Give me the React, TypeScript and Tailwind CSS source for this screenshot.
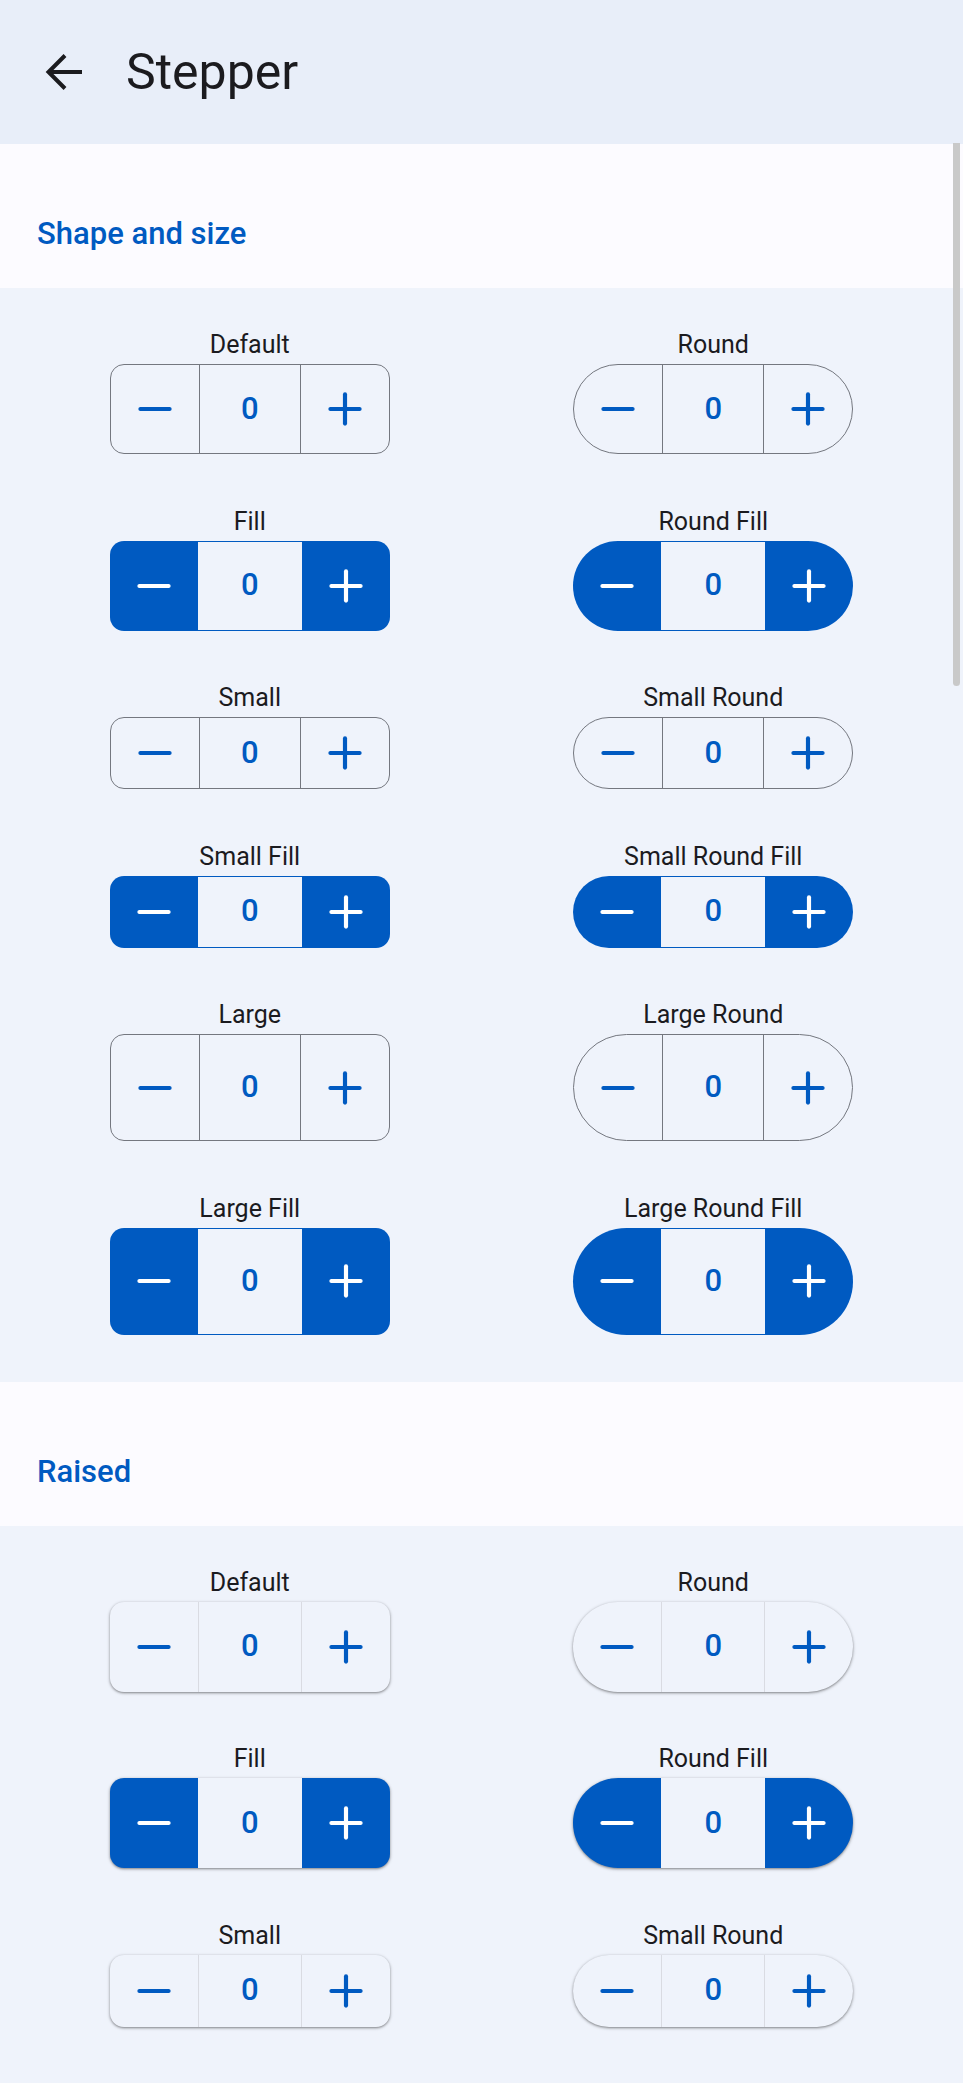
import React from "react";

type Size = "sm" | "md" | "lg";

type Variant = {
  label: string;
  size: Size;
  round?: boolean;
  fill?: boolean;
};

const heights: Record<Size, string> = {
  sm: "h-[72px]",
  md: "h-[90px]",
  lg: "h-[107px]"
};

const shapeRows: [Variant, Variant][] = [
  [
    { label: "Default", size: "md" },
    { label: "Round", size: "md", round: true }
  ],
  [
    { label: "Fill", size: "md", fill: true },
    { label: "Round Fill", size: "md", round: true, fill: true }
  ],
  [
    { label: "Small", size: "sm" },
    { label: "Small Round", size: "sm", round: true }
  ],
  [
    { label: "Small Fill", size: "sm", fill: true },
    { label: "Small Round Fill", size: "sm", round: true, fill: true }
  ],
  [
    { label: "Large", size: "lg" },
    { label: "Large Round", size: "lg", round: true }
  ],
  [
    { label: "Large Fill", size: "lg", fill: true },
    { label: "Large Round Fill", size: "lg", round: true, fill: true }
  ]
];

export default function App() {
  return (
    <div
      className="relative h-[2083px] w-[963px] overflow-hidden bg-[#eff3fb] text-[#1b1b1f]"
      style={{ fontFamily: "Roboto, 'Noto Sans', sans-serif" }}
    >
      <header className="flex h-[144px] items-center bg-[#e8eef9]">
        <svg className="ml-[45px] h-[36px] w-[37px]" viewBox="0 0 37 36" fill="none" stroke="#1b1b1f" strokeWidth="4">
          <path d="M3 18H37" />
          <path d="M20 1.5L3.5 18L20 34.5" />
        </svg>
        <h1 className="ml-[44px] text-[50px] font-normal leading-none">Stepper</h1>
      </header>

      <Section title="Shape and size" raised={false} rows={shapeRows} />
      {/* only the rows that fit on screen */}
      <Section title="Raised" raised rows={shapeRows.slice(0, 3)} />

      <div className="absolute right-[3px] top-[143px] h-[543px] w-[7px] rounded-b-[4px] bg-[#c9c9c9]" />
    </div>
  );
}

function Section({ title, raised, rows }: { title: string; raised: boolean; rows: [Variant, Variant][] }) {
  return (
    <section>
      <div className="h-[144px] bg-[#fcfbff] pl-[37px] pt-[72px]">
        <h2 className="text-[31px] font-medium leading-[36px] text-[#005ac1]">{title}</h2>
      </div>
      <div className="grid grid-cols-2 gap-y-[52.5px] px-[18px] pb-[47px] pt-[42px]">
        {rows.flat().map((v) => (
          <div key={v.label} className="flex flex-col items-center">
            <span className="text-[25px] leading-[30px]">{v.label}</span>
            <Stepper {...v} raised={raised} />
          </div>
        ))}
      </div>
    </section>
  );
}

function Stepper({ size, round, fill, raised }: Variant & { raised: boolean }) {
  const shape = round ? "rounded-full" : "rounded-[14px]";
  const frame = fill
    ? "bg-[#005ac1]"
    : raised
      ? "bg-[#eff3fb]"
      : "border border-[#74777f]";
  const divider = fill
    ? raised
      ? ""
      : "border-y border-[#005ac1]"
    : raised
      ? "border-x border-[#d9dbe2]"
      : "border-x border-[#74777f]";
  const icon = fill ? "#ffffff" : "#005ac1";

  return (
    <div
      className={`mt-[4px] flex w-[280px] overflow-hidden ${heights[size]} ${shape} ${frame} ${
        raised ? "shadow-[0_1px_3px_1px_rgba(0,0,0,0.15),0_1px_2px_rgba(0,0,0,0.3)]" : ""
      }`}
    >
      <button className="flex w-[88px] shrink-0 items-center justify-center">
        <svg width="50" height="50" viewBox="0 0 24 24" fill="none" stroke={icon} strokeWidth="2" strokeLinecap="round">
          <path d="M5 12h14" />
        </svg>
      </button>
      <div
        className={`flex flex-1 items-center justify-center bg-[#eff3fb] text-[31px] font-medium text-[#005ac1] ${divider}`}
      >
        0
      </div>
      <button className="flex w-[88px] shrink-0 items-center justify-center">
        <svg width="50" height="50" viewBox="0 0 24 24" fill="none" stroke={icon} strokeWidth="2" strokeLinecap="round">
          <path d="M5 12h14" />
          <path d="M12 5v14" />
        </svg>
      </button>
    </div>
  );
}
